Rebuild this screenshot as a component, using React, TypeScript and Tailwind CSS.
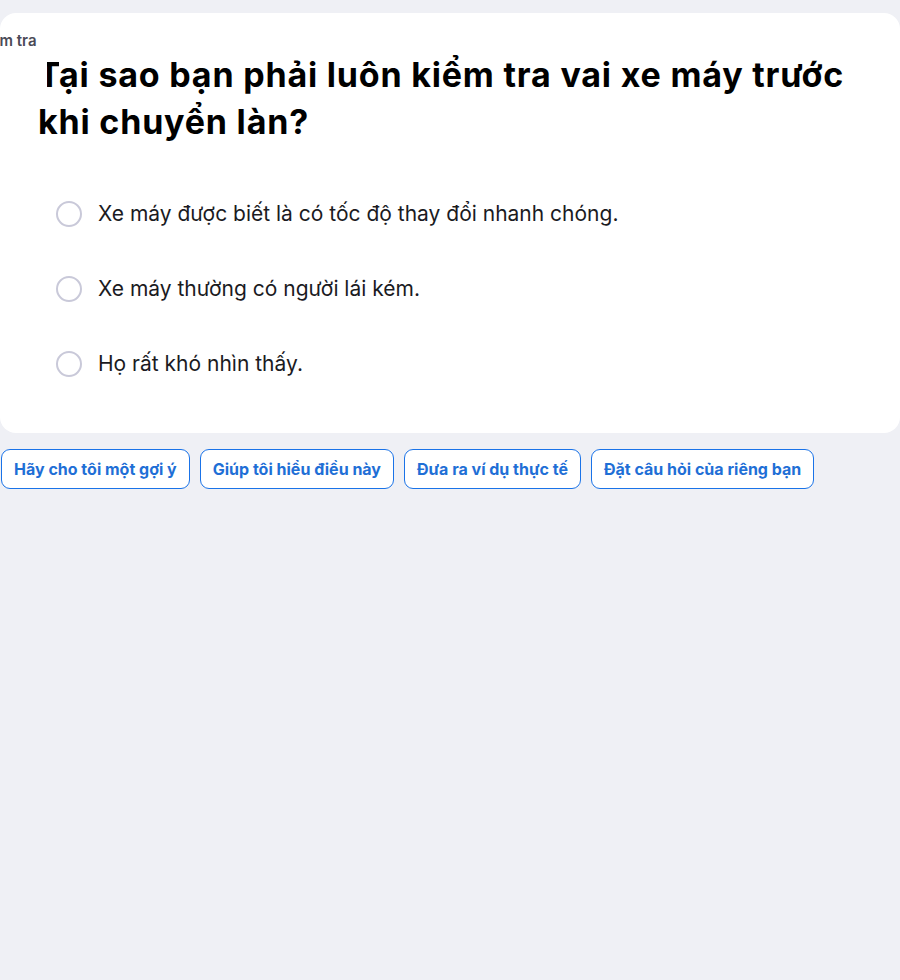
const options = [
  'Xe máy được biết là có tốc độ thay đổi nhanh chóng.',
  'Xe máy thường có người lái kém.',
  'Họ rất khó nhìn thấy.'
]

const prompts = [
  'Hãy cho tôi một gợi ý',
  'Giúp tôi hiểu điều này',
  'Đưa ra ví dụ thực tế',
  'Đặt câu hỏi của riêng bạn'
]

export default function App() {
  return (
    <div className="min-h-screen bg-[#eff0f5] pt-[13px] font-['Inter',sans-serif]">
      {/* Question card */}
      <div className="w-[900px] overflow-hidden rounded-2xl bg-white pb-[56px]">
        <div className="-ml-[24px] pt-[18px] text-[15px] font-semibold leading-5 text-[#4b4b57]">
          Kiểm tra
        </div>
        <h1 className="pl-[38px] pr-[40px] text-[34px] font-bold leading-[47px] tracking-[0.8px] text-black">
          <span className="[clip-path:inset(0_0_0_9px)]">T</span>ại sao bạn phải luôn kiểm tra vai xe máy
          trước khi chuyển làn?
        </h1>

        <div className="mt-[56px] flex flex-col gap-[49px] pl-[56px]">
          {options.map(o => (
            <label key={o} className="flex cursor-pointer items-center gap-[16px]">
              <span className="size-[26px] shrink-0 rounded-full border-2 border-[#c9c9d9] bg-white" />
              <span className="text-[21px] leading-[26px] text-[#1b1b1f]">{o}</span>
            </label>
          ))}
        </div>
      </div>

      {/* Suggested prompts */}
      <div className="mt-[16px] flex gap-[10px] pl-[1px]">
        {prompts.map(p => (
          <button
            key={p}
            className="h-[40px] rounded-[9px] border border-[#1a73e8] bg-white px-[12px] text-[16px] font-bold text-[#1f6fd6]"
          >
            {p}
          </button>
        ))}
      </div>
    </div>
  )
}
